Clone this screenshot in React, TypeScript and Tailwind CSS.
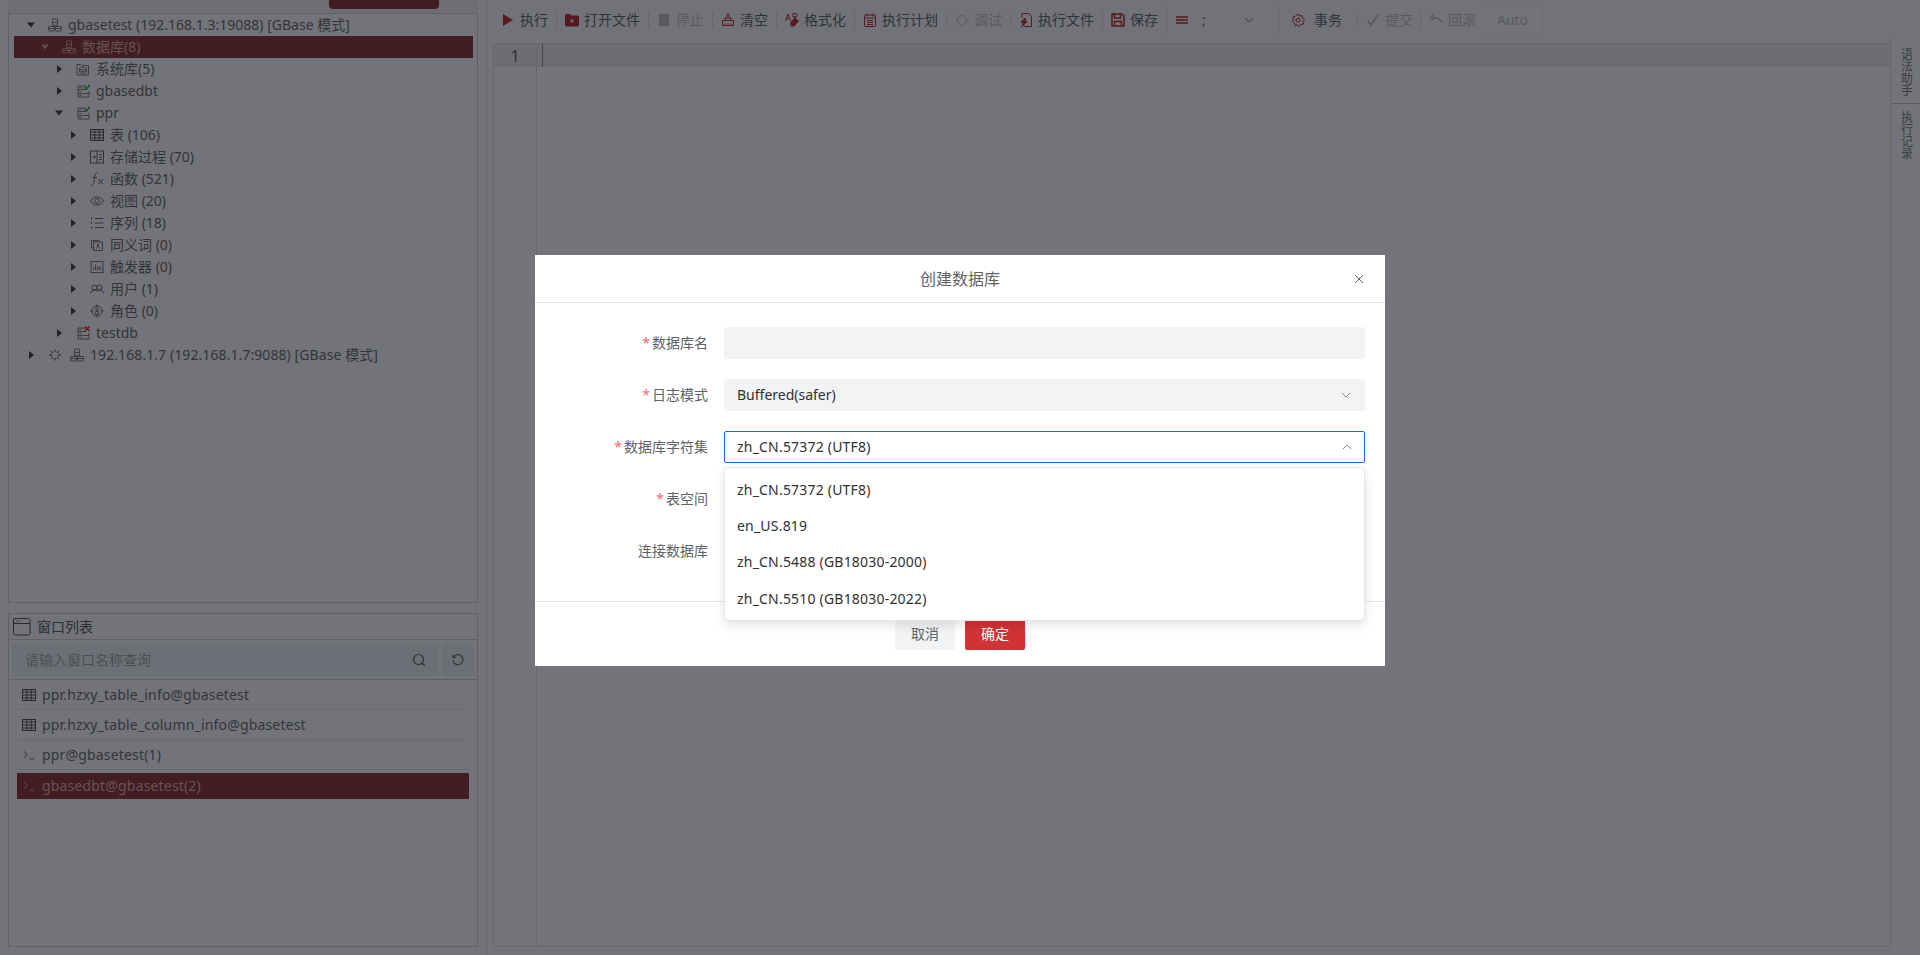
import { ReactNode } from "react";

const FONT = "font-['Noto_Sans','Noto_Sans_CJK_SC',sans-serif]";

function Svg({ size = 14, className = "", children }: { size?: number; className?: string; children: ReactNode }) {
  return (
    <svg width={size} height={size} viewBox="0 0 14 14" fill="none" stroke="currentColor" strokeWidth="1" className={"shrink-0 " + className}>
      {children}
    </svg>
  );
}

function Arrow({ open }: { open?: boolean }) {
  return (
    <svg width="8" height="8" viewBox="0 0 8 8" className="shrink-0 text-[#444]" fill="currentColor">
      {open ? <path d="M0 1.500h8L4 6.500z" /> : <path d="M2 0l5 4-5 4z" />}
    </svg>
  );
}

const IconServer = () => (
  <Svg className="text-[#777]">
    <rect x="4.500" y="1" width="5" height="3.500" rx=".5" />
    <rect x="4.500" y="4.500" width="5" height="3" rx=".5" />
    <rect x=".5" y="8.500" width="6" height="4.500" rx=".5" />
    <rect x="7.500" y="8.500" width="6" height="4.500" rx=".5" />
    <path d="M.5 10.500h6M7.500 10.500h6" />
  </Svg>
);
const IconSysDb = () => (
  <Svg className="text-[#777]">
    <path d="M1 2.500h4l1 1h6.500v9.500H1z" />
    <ellipse cx="7" cy="6.500" rx="3.500" ry="1.400" />
    <path d="M3.500 6.500v3.500c0 .8 1.600 1.400 3.500 1.400s3.500-.6 3.500-1.400V6.500M3.500 8.300c0 .8 1.600 1.400 3.500 1.400s3.500-.6 3.500-1.400" />
  </Svg>
);
const IconDb = ({ bad }: { bad?: boolean }) => (
  <Svg className="text-[#777]">
    <path d="M10 2H2v11h11V7M2 5.500h8M2 9.500h11M3.500 3.700h2M3.500 7.500h2M3.500 11.300h2" />
    {bad ? (
      <path d="M9 .5l4.500 4.500M13.500 .5L9 5" stroke="#e0323c" strokeWidth="1.600" />
    ) : (
      <path d="M8.500 3l2 2L14 .5" stroke="#2f9e44" strokeWidth="1.500" />
    )}
  </Svg>
);
const IconTable = ({ size = 14 }: { size?: number }) => (
  <Svg size={size} className="text-[#555]">
    <rect x=".5" y="1.500" width="13" height="11" />
    <path d="M.5 4h13M.5 7h13M.5 10h13M4.800 1.500v11M9.200 1.500v11" />
  </Svg>
);
const IconProc = () => (
  <Svg className="text-[#666]">
    <rect x=".5" y="1" width="13" height="12" />
    <path d="M7 1v12M2.500 7h3M4 5.500L5.500 7 4 8.500M9 4.500h3M9 7h3M9 9.500h3" />
  </Svg>
);
const IconFx = () => (
  <svg width="14" height="14" viewBox="0 0 14 14" fill="none" stroke="#666" className="shrink-0">
    <path d="M7.500 .5C5.500 .5 5 2.500 4.500 6.500S3.500 13.500 1 13.500M2.500 5.500h4.500M8.500 7l4.500 5M13 7l-4.500 5" />
  </svg>
);
const IconEye = () => (
  <Svg className="text-[#666]">
    <path d="M.5 7C2.500 4 4.500 3 7 3s4.500 1 6.500 4c-2 3-4 4-6.500 4S2.500 10 .5 7z" />
    <circle cx="7" cy="7" r="2.200" />
  </Svg>
);
const IconSeq = () => (
  <Svg className="text-[#666]">
    <path d="M5 2.500h8.500M5 7h8.500M5 11.500h8.500M1.500 1.500v2M1.500 6v2M1.500 10.500v2" />
  </Svg>
);
const IconSyn = () => (
  <Svg className="text-[#777]">
    <path d="M3 10H1.500V2.500H9V4" />
    <rect x="3.500" y="4" width="9" height="8.500" />
    <path d="M6.500 10.500L8 6l1.500 4.500" />
  </Svg>
);
const IconTrig = () => (
  <Svg className="text-[#777]">
    <rect x="1" y="1.500" width="12" height="11" />
    <path d="M3.500 10V7M5.500 10V4.500M7.500 10V7M9 10V6M10.800 10V7.500" />
  </Svg>
);
const IconUsers = () => (
  <Svg className="text-[#666]">
    <circle cx="4.500" cy="5.500" r="2.500" />
    <circle cx="9.500" cy="5.500" r="2.500" />
    <path d="M.5 11.500c.5-2 2-3.500 4-3.500 1 0 1.800 .4 2.500 1 .7-.6 1.500-1 2.500-1 2 0 3.500 1.500 4 3.500" />
  </Svg>
);
const IconRole = () => (
  <Svg className="text-[#666]">
    <circle cx="7" cy="7" r="5" />
    <path d="M7 .5v2M7 11.500v2M.5 7h2M11.500 7h2" />
    <circle cx="7" cy="5.500" r="1.400" />
    <circle cx="7" cy="8.700" r="1.600" />
  </Svg>
);
const IconSpin = () => (
  <svg width="12" height="12" viewBox="0 0 12 12" fill="none" stroke="#666" strokeWidth="1.300" className="shrink-0">
    <path d="M6 .5v2.500M6 9v2.500M.5 6H3M9 6h2.500M2.100 2.100L3.900 3.900M8.100 8.100l1.800 1.800M9.900 2.100L8.100 3.900M3.900 8.100l-1.800 1.800" />
  </svg>
);

type TreeRow = { level: number; open?: boolean; icon: ReactNode; label: string; active?: boolean };

const tree: TreeRow[] = [
  { level: 0, open: true, icon: <IconServer />, label: "gbasetest (192.168.1.3:19088) [GBase 模式]" },
  { level: 1, open: true, icon: <IconServer />, label: "数据库(8)", active: true },
  { level: 2, icon: <IconSysDb />, label: "系统库(5)" },
  { level: 2, icon: <IconDb />, label: "gbasedbt" },
  { level: 2, open: true, icon: <IconDb />, label: "ppr" },
  { level: 3, icon: <IconTable />, label: "表 (106)" },
  { level: 3, icon: <IconProc />, label: "存储过程 (70)" },
  { level: 3, icon: <IconFx />, label: "函数 (521)" },
  { level: 3, icon: <IconEye />, label: "视图 (20)" },
  { level: 3, icon: <IconSeq />, label: "序列 (18)" },
  { level: 3, icon: <IconSyn />, label: "同义词 (0)" },
  { level: 3, icon: <IconTrig />, label: "触发器 (0)" },
  { level: 3, icon: <IconUsers />, label: "用户 (1)" },
  { level: 3, icon: <IconRole />, label: "角色 (0)" },
  { level: 2, icon: <IconDb bad />, label: "testdb" },
];

const levelPad = ["pl-[13px]", "pl-[27px]", "pl-[41px]", "pl-[55px]"];

function Tree() {
  return (
    <div className="ml-[5px] mr-[4px] flex flex-col">
      {tree.map((r) => (
        <div
          key={r.label}
          className={
            "flex h-[22px] items-center " +
            levelPad[r.level] +
            (r.active ? " bg-[#843a46] text-[#cfa4a8] [&_svg]:text-[#c09094]" : " text-[#676a70]")
          }>
          <Arrow open={r.open} />
          <span className="ml-[13px]">{r.icon}</span>
          <span className="ml-[6px] whitespace-nowrap text-sm">{r.label}</span>
        </div>
      ))}
      <div className="flex h-[22px] items-center pl-[13px] text-[#676a70]">
        <Arrow />
        <span className="ml-[14px]"><IconSpin /></span>
        <span className="ml-[9px]"><IconServer /></span>
        <span className="ml-[6px] whitespace-nowrap text-sm tracking-[0.08px]">192.168.1.7 (192.168.1.7:9088) [GBase 模式]</span>
      </div>
    </div>
  );
}

const IconTerm = () => (
  <Svg className="text-[#666]">
    <path d="M1.500 3l4 3.500-4 3.500M7.500 11h4.500" />
  </Svg>
);

const windows = [
  { icon: <IconTable />, label: "ppr.hzxy_table_info@gbasetest" },
  { icon: <IconTable />, label: "ppr.hzxy_table_column_info@gbasetest" },
  { icon: <IconTerm />, label: "ppr@gbasetest(1)" },
];

function WindowList() {
  return (
    <div className="mt-[10px] flex h-[334px] flex-col border border-[#bfc2cc]">
      <div className="flex h-[26px] items-center border-b border-[#bfc2cc] pl-[4px] text-[#555a62]">
        <svg width="18" height="18" viewBox="0 0 18 18" fill="none" stroke="#555" className="shrink-0">
          <rect x=".5" y=".5" width="16.500" height="16.500" rx="1.500" />
          <path d="M.5 5.500h16.500M3 3h1M5 3h1M7 3h1" />
        </svg>
        <span className="ml-[6px] text-sm">窗口列表</span>
      </div>
      <div className="flex h-[40px] items-center gap-[3px] border-b border-[#bfc2cc] px-[3px]">
        <div className="flex h-[32px] flex-1 items-center justify-between rounded-[2px] bg-[#d8deec] pl-[13px] pr-[13px]">
          <span className="text-sm text-[#9a9ea6]">请输入窗口名称查询</span>
          <svg width="14" height="14" viewBox="0 0 14 14" fill="none" stroke="#666" strokeWidth="1.200">
            <circle cx="6.500" cy="6.500" r="5" />
            <path d="M10 10l3 3" />
          </svg>
        </div>
        <div className="flex h-[32px] w-[32px] items-center justify-center rounded-[2px] bg-[#d8deec]">
          <svg width="14" height="14" viewBox="0 0 14 14" fill="none" stroke="#666" strokeWidth="1.200">
            <path d="M2.500 4.500A5 5 0 1 1 2 7M2 1.500v3h3" />
          </svg>
        </div>
      </div>
      <div className="flex flex-col px-[8px] tracking-[0.17px]">
        {windows.map((w) => (
          <div key={w.label} className="flex h-[30px] items-center gap-[6px] border-b border-[#d4d7e0] pl-[5px] text-sm text-[#666b74]">
            {w.icon}
            <span className="whitespace-nowrap">{w.label}</span>
          </div>
        ))}
        <div className="mt-[3px] flex h-[26px] items-center gap-[6px] bg-[#843a46] pl-[5px] text-sm text-[#cfa4a8] [&_svg]:text-[#c09094]">
          <IconTerm />
          <span className="whitespace-nowrap">gbasedbt@gbasetest(2)</span>
        </div>
      </div>
    </div>
  );
}

const RED = "text-[#a8343f]";
const GREY = "text-[#b4b6bc]";

const toolItems: { label: string; off?: boolean; icon: ReactNode }[] = [
  { label: "执行", icon: <svg width="14" height="14" viewBox="0 0 14 14" className={RED} fill="currentColor"><path d="M2 1l10 6-10 6z" /></svg> },
  { label: "打开文件", icon: <svg width="14" height="14" viewBox="0 0 14 14" className={RED} fill="currentColor"><path d="M0 2.500Q0 1 1.500 1H5l1.500 1.500h6Q14 2.500 14 4v8q0 1.500-1.500 1.500h-11Q0 13.500 0 12z" /><path d="M7 6v4M5 8h4" stroke="#ddd" strokeWidth="1.200" /></svg> },
  { label: "停止", off: true, icon: <svg width="14" height="14" viewBox="0 0 14 14" className={GREY} fill="currentColor"><rect x="2" y="1" width="10" height="12" /></svg> },
  { label: "清空", icon: <Svg className={RED}><path d="M1.500 12.500h11v-5h-11zM4 7.500V5h6v2.500M6 5V1.500h2V5M4 12.500v-2M7 12.500v-2M10 12.500v-2" /></Svg> },
  { label: "格式化", icon: <svg width="14" height="14" viewBox="0 0 14 14" className={RED} fill="none" stroke="currentColor"><path d="M.5 8L3 1l2.500 7M1.500 5.500h3" /><path d="M8 .5h2.500a1.500 1.500 0 0 1 0 3.500H8zM8 4h3" /><path d="M6 9l4-4 3.500 3-4.500 5H6z" fill="currentColor" /></svg> },
  { label: "执行计划", icon: <Svg className={RED}><rect x="1.500" y="2" width="11" height="11.500" rx="1" /><path d="M1.500 5h11M4 .5v3M10 .5v3M4 7.500h6M4 9.500h6M4 11.500h6" /></Svg> },
  { label: "调试", off: true, icon: <Svg className={GREY}><ellipse cx="7" cy="7.500" rx="4" ry="5" /><path d="M4.500 2.500L3 1M9.500 2.500L11 1M3 6H.5M13.500 6H11M3 9H.5M13.500 9H11" /></Svg> },
  { label: "执行文件", icon: <svg width="14" height="14" viewBox="0 0 14 14" className={RED} fill="none" stroke="currentColor"><path d="M3 5V.5h6.500L12.500 3.500V13.500H5" /><path d="M5.500 5.500L2 9.500h2.500L3 13.500l5-5H5.500L7 5.500z" fill="currentColor" /></svg> },
  { label: "保存", icon: <Svg className={RED}><path d="M1 1h10l2 2v10H1zM3.500 1v4h6V1M3.500 13V8.500h7V13" strokeWidth="1.500" /></Svg> },
];

function Toolbar() {
  return (
    <div className="flex h-[39px] items-center bg-[#e4e6f0] text-sm">
      {toolItems.map((t, i) => (
        <div key={t.label} className="flex items-center">
          {i > 0 && <span className="h-[16px] w-px bg-[#cbcdd6]" />}
          <div className={"flex items-center gap-[5px] px-[8px] " + (t.off ? "text-[#b4b6bc]" : "text-[#5f6672]")}>
            {t.icon}
            <span>{t.label}</span>
          </div>
        </div>
      ))}
      <span className="h-[30px] w-px bg-[#cbcdd6]" />
      <div className="flex w-[30px] justify-start pl-[8px]">
        <Svg className={RED}><path d="M1 4h12M1 7h12M1 10h12" strokeWidth="1.500" /></Svg>
      </div>
      <div className="flex h-[30px] w-[81px] items-center text-[#666]">
        <span className="ml-[5px]">;</span>
        <svg width="12" height="12" viewBox="0 0 12 12" fill="none" stroke="#777" className="ml-[37px]"><path d="M2 4l4 4 4-4" /></svg>
      </div>
      <span className="h-[30px] w-px bg-[#cbcdd6]" />
      <div className="flex items-center gap-[9px] pl-[12px] pr-[15px] text-[#5f6672]">
        <Svg className={RED}><path d="M7 1l1.500 2 2.500-.5 .5 2.500 2 1.500-1.500 2 .5 2.500-2.500 .5-1.500 2-2-1.500-2.500 .5-.5-2.500-2-1.500 1-2-.5-2.500L4.500 3z" /><circle cx="7" cy="7.200" r="2" /></Svg>
        <span>事务</span>
      </div>
      <span className="h-[16px] w-px bg-[#cbcdd6]" />
      <div className="flex items-center gap-[5px] pl-[8px] pr-[7px] text-[#b4b6bc]">
        <Svg><path d="M1.500 7.500L5 12 12 1.500" strokeWidth="1.800" /></Svg>
        <span>提交</span>
      </div>
      <span className="h-[16px] w-px bg-[#cbcdd6]" />
      <div className="flex items-center gap-[5px] pl-[8px] pr-[7px] text-[#b4b6bc]">
        <Svg><path d="M1 4.500L4 2v5zM3.500 4.500c5 0 8 1.500 9 5" strokeWidth="1.400" /></Svg>
        <span>回滚</span>
      </div>
      <div className="flex h-[29px] w-[59px] items-center justify-center rounded-[2px] border border-[#d8deec] bg-[#e4e8f4] text-[#b4b6bc]">Auto</div>
    </div>
  );
}

function Editor() {
  return (
    <div className="mt-[4px] flex flex-1 border-l border-t border-b border-[#cfd1da] bg-[#e8eaf6]">
      <div className="flex w-[43px] flex-col border-r border-[#cfd1da]">
        <div className="flex h-[23px] items-center justify-center bg-[#dcdde4] text-base text-[#5f6672]">1</div>
      </div>
      <div className="flex-1">
        <div className="flex h-[23px] bg-[#dcdde4] pl-[5px]">
          <span className="h-[23px] w-px bg-[#888]" />
        </div>
      </div>
    </div>
  );
}

function Rail() {
  return (
    <div className="flex w-[30px] flex-col items-stretch border-l border-[#cfd1da] text-xs text-[#777b83]">
      <div className="flex h-[65px] items-start justify-center border-b border-[#babcc4] pt-[9px]">
        <span className="leading-[14px] [writing-mode:vertical-rl]">语法助手</span>
      </div>
      <div className="flex items-start justify-center pt-[7px]">
        <span className="leading-[14px] [writing-mode:vertical-rl]">执行记录</span>
      </div>
    </div>
  );
}

function Field({ label, req, children }: { label: string; req?: boolean; children?: ReactNode }) {
  return (
    <div className="mb-[20px] flex h-[32px] items-center">
      <div className="w-[173px] text-right text-sm text-[#606266]">
        {req && <span className="mr-[2px] text-[#f56c6c]">*</span>}
        {label}
      </div>
      <div className="ml-[16px] flex-1">{children}</div>
    </div>
  );
}

function Chevron({ up }: { up?: boolean }) {
  return (
    <svg width="12" height="12" viewBox="0 0 12 12" fill="none" stroke="#85878e">
      <path d={up ? "M2 8l4-4 4 4" : "M2 4l4 4 4-4"} />
    </svg>
  );
}

const charsets = ["zh_CN.57372 (UTF8)", "en_US.819", "zh_CN.5488 (GB18030-2000)", "zh_CN.5510 (GB18030-2022)"];

function Modal() {
  return (
    <div className="relative flex h-[411px] w-[850px] flex-col bg-white">
      <div className="relative flex h-[48px] items-center justify-center border-b border-[#e4e7ed] text-base text-[#606266]">
        创建数据库
        <svg width="10" height="10" viewBox="0 0 10 10" fill="none" stroke="#606266" className="absolute right-[21px] top-[19px]">
          <path d="M1 1l8 8M9 1l-8 8" />
        </svg>
      </div>
      <div className="h-[299px] border-b border-[#e4e7ed] pr-[20px] pt-[24px]">
        <Field label="数据库名" req>
          <div className="h-[32px] rounded-[2px] bg-[#f2f3f5]" />
        </Field>
        <Field label="日志模式" req>
          <div className="flex h-[32px] items-center justify-between rounded-[2px] bg-[#f2f3f5] px-[13px] text-sm text-[#303133]">
            Buffered(safer)
            <Chevron />
          </div>
        </Field>
        <Field label="数据库字符集" req>
          <div className="flex h-[32px] items-center justify-between rounded-[2px] border border-[#1d64f2] px-[12px] text-sm text-[#303133]">
            <span className="tracking-[0.2px]">{charsets[0]}</span>
            <span className="-mr-px"><Chevron up /></span>
          </div>
        </Field>
        <Field label="表空间" req />
        <Field label="连接数据库" />
      </div>
      <div className="flex flex-1 items-end justify-center gap-[10px] pb-[16px] text-sm">
        <button className="h-[32px] w-[60px] rounded-[2px] bg-[#f2f3f5] text-[#606266]">取消</button>
        <button className="h-[32px] w-[60px] rounded-[2px] bg-[#cf3335] text-white">确定</button>
      </div>
      <div className="absolute left-[189px] top-[212px] flex h-[154px] w-[641px] flex-col rounded border border-[#e4e7ed] bg-white pt-[4px] shadow-[0_4px_12px_rgba(0,0,0,0.12)]">
        {charsets.map((c) => (
          <div key={c} className="flex h-[36px] items-center pl-[12px] text-sm tracking-[0.2px] text-[#303133] last:mt-px">{c}</div>
        ))}
      </div>
    </div>
  );
}

export default function App() {
  return (
    <div className={"relative flex h-[955px] w-[1920px] overflow-hidden bg-[#e7e9f5] " + FONT}>
      <div className="flex w-[487px] shrink-0 flex-col border-r border-[#cfd1da] pl-[8px] pr-[8px]">
        <div className="flex h-[13px] items-start bg-[#dcdfea]">
          <div className="ml-[321px] h-[9px] w-[110px] rounded-b-sm bg-[#843a46]" />
        </div>
        <div className="flex h-[590px] flex-col border border-[#bfc2cc]">
          <Tree />
        </div>
        <WindowList />
      </div>
      <div className="ml-[6px] flex flex-1 flex-col pb-[8px]">
        <Toolbar />
        <div className="flex flex-1">
          <div className="flex flex-1 flex-col"><Editor /></div>
          <Rail />
        </div>
      </div>
      <div className="absolute inset-0 flex justify-center bg-black/50 pt-[255px]">
        <Modal />
      </div>
    </div>
  );
}
